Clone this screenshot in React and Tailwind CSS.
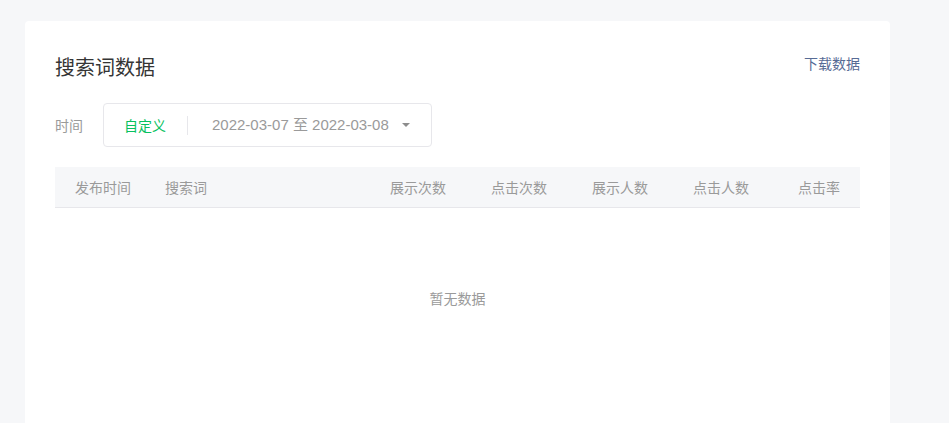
export default function App() {
  return (
    <div className="min-h-screen bg-[#f6f7f9] pl-[25px] pt-[21px] font-['Noto_Sans','Noto_Sans_CJK_SC',sans-serif]">
      <div className="w-[865px] min-h-[460px] rounded-[4px] bg-white px-[30px] pt-[33px]">
        <div className="flex items-start justify-between">
          <h2 className="text-[20px] leading-[28px] text-[#353535]">搜索词数据</h2>
          <a className="text-[14px] leading-[20px] text-[#576b95] cursor-pointer">下载数据</a>
        </div>
        <div className="mt-[21px] flex items-center">
          <span className="w-[48px] shrink-0 text-[14px] text-[#9a9a9a]">时间</span>
          <div className="flex h-[44px] w-[329px] shrink-0 items-center whitespace-nowrap rounded-[4px] border border-[#e7e7eb] pl-[20px] pr-[21px]">
            <span className="text-[14px] text-[#07c160]">自定义</span>
            <span className="mx-[21px] h-[19px] w-px bg-[#e7e7eb]"></span>
            <span className="ml-[3px] font-['Liberation_Sans','Noto_Sans_CJK_SC',sans-serif] text-[15px] text-[#9a9a9a]">2022-03-07 至 2022-03-08</span>
            <span className="ml-auto h-0 w-0 border-x-[4px] border-t-[4px] border-x-transparent border-t-[#8d8d8d]"></span>
          </div>
        </div>
        <div className="mt-[20px]">
          <div className="grid h-[41px] grid-cols-[90px_220px_101px_101px_101px_101px_91px] items-center border-b border-[#e7e7eb] bg-[#f6f7f9] text-[14px] text-[#9a9a9a]">
            <div className="pl-[20px]">发布时间</div>
            <div className="pl-[20px]">搜索词</div>
            <div className="pr-[20px] text-right">展示次数</div>
            <div className="pr-[20px] text-right">点击次数</div>
            <div className="pr-[20px] text-right">展示人数</div>
            <div className="pr-[20px] text-right">点击人数</div>
            <div className="pr-[20px] text-right">点击率</div>
          </div>
          <div className="flex h-[180px] items-center justify-center text-[14px] text-[#9a9a9a]">暂无数据</div>
        </div>
      </div>
    </div>
  );
}
